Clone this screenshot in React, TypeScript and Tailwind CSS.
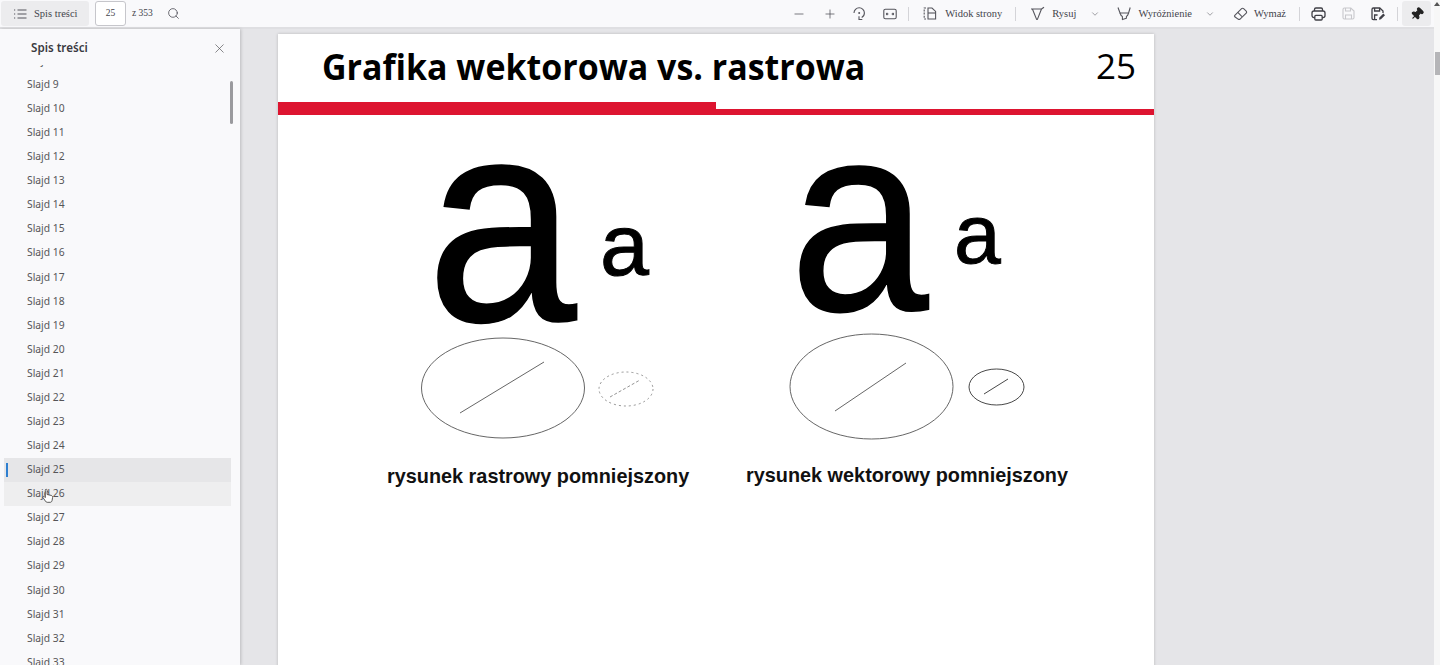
import React from 'react';
import { Search, Minus, Plus, X, ChevronDown, Pin } from 'lucide-react';

const slides = Array.from({ length: 26 }, (_, i) => i + 8);

function Sep() {
  return <div className="w-px h-[14px] bg-[#d4d4d8]" />;
}

function ListIcon() {
  return (
    <svg width="14" height="14" viewBox="0 0 14 14" fill="none" stroke="#55555c" strokeWidth="1.1">
      <path d="M4.5 3h9M4.5 7h9M4.5 11h9" />
      <path d="M1 3h1.2M1 7h1.2M1 11h1.2" />
    </svg>
  );
}

function RotateIcon() {
  return (
    <svg width="15" height="15" viewBox="0 0 15 15" fill="none" stroke="#55555c" strokeWidth="1.1">
      <path d="M2 7a5.2 5.2 0 0 1 10.4 0c0 2-1.1 3.6-2.7 4.5" />
      <path d="M7 10.2v3.3h3.3" />
      <circle cx="7.2" cy="7" r="1" fill="#55555c" stroke="none" />
    </svg>
  );
}

function FitIcon() {
  return (
    <svg width="14" height="12" viewBox="0 0 14 12" fill="none" stroke="#55555c" strokeWidth="1.1">
      <rect x="0.8" y="1.2" width="12.4" height="9.6" rx="1.6" />
      <path d="M3 6h2.4M3.2 6l1.2-1.1M3.2 6l1.2 1.1M11 6H8.6M10.8 6 9.6 4.9M10.8 6 9.6 7.1" />
    </svg>
  );
}

function PageViewIcon() {
  return (
    <svg width="14" height="13" viewBox="0 0 14 13" fill="none" stroke="#55555c" strokeWidth="1.1">
      <path d="M3 1H1.2v11H3" strokeDasharray="2 1.2" />
      <path d="M5 1h4l3.6 3.4V12H5z" />
      <path d="M5 6h7.6" />
    </svg>
  );
}

function DrawIcon() {
  return (
    <svg width="15" height="15" viewBox="0 0 15 15" fill="none" stroke="#55555c" strokeWidth="1.1">
      <path d="M1 3h10.5M2.4 3 6.6 13.4h.8L11.5 3 14 1.2" strokeLinejoin="round" />
    </svg>
  );
}

function HighlightIcon() {
  return (
    <svg width="15" height="15" viewBox="0 0 15 15" fill="none" stroke="#55555c" strokeWidth="1.1">
      <path d="M1 1.5 3 7h8.6l1.6-5.5" />
      <path d="M3 7c.6 2 1.4 3 2.4 3.4v3.2l4-1.4V10.4c1-.6 1.7-1.6 2.2-3.4" strokeLinejoin="round" />
    </svg>
  );
}

function EraserIcon() {
  return (
    <svg width="15" height="15" viewBox="0 0 15 15" fill="none" stroke="#55555c" strokeWidth="1.1">
      <path d="M1.8 9.4 8.6 2.6a1.4 1.4 0 0 1 2 0l2.6 2.6a1.4 1.4 0 0 1 0 2L6.8 13.4H5.4L1.8 10.8a1 1 0 0 1 0-1.4z" strokeLinejoin="round" />
      <path d="M4.8 6.4l4.2 4.2" />
    </svg>
  );
}

function PrintIcon() {
  return (
    <svg width="15" height="14" viewBox="0 0 15 14" fill="none" stroke="#3f3f46" strokeWidth="1.3">
      <path d="M3.5 4V2.4A1.4 1.4 0 0 1 4.9 1h5.2a1.4 1.4 0 0 1 1.4 1.4V4" />
      <rect x="1" y="4" width="13" height="6.6" rx="2" />
      <rect x="3.8" y="8.4" width="7.4" height="4.6" rx="1" fill="#f9f9fb" />
    </svg>
  );
}

function SaveIcon({ color }: { color: string }) {
  return (
    <svg width="13" height="13" viewBox="0 0 13 13" fill="none" stroke={color} strokeWidth="1.1">
      <path d="M2.4 1h6.4L12 4v6.6a1.4 1.4 0 0 1-1.4 1.4H2.4A1.4 1.4 0 0 1 1 10.6V2.4A1.4 1.4 0 0 1 2.4 1z" />
      <path d="M3.5 1v3h5V1M3.5 12V8h6v4" />
    </svg>
  );
}

function SaveEditIcon() {
  return (
    <svg width="15" height="14" viewBox="0 0 15 14" fill="none" stroke="#3f3f46" strokeWidth="1.3">
      <path d="M6 12.6H2.4A1.4 1.4 0 0 1 1 11.2V2.4A1.4 1.4 0 0 1 2.4 1h6.4L12 4v2" />
      <path d="M3.6 1v3h5V1M3.6 12V8h3" />
      <path d="M8 12.8 8.4 10.6 12.4 6.6 14 8.2 10 12.2z" fill="#3f3f46" stroke="none" />
    </svg>
  );
}

function Figure({ className, bigClass, smallClass, caption, captionClass, dashed, ring, line, miniRing, miniLine }: {
  className: string;
  bigClass: string;
  smallClass: string;
  caption: string;
  captionClass: string;
  dashed?: boolean;
  ring: number[];
  line: number[];
  miniRing: number[];
  miniLine: number[];
}) {
  const miniStroke = dashed ? '#888' : '#333';
  return (
    <div className={className}>
      <div className="relative h-[229px] font-['Liberation_Sans',sans-serif] text-black">
        <span className={bigClass}>a</span>
        <span className={smallClass}>a</span>
      </div>
      <svg width="340" height="112" viewBox="0 0 340 112" fill="none" stroke="#555" strokeWidth="0.9" className="block overflow-visible">
        <ellipse cx={ring[0]} cy={ring[1]} rx={ring[2]} ry={ring[3]} />
        <line x1={line[0]} y1={line[1]} x2={line[2]} y2={line[3]} />
        <ellipse cx={miniRing[0]} cy={miniRing[1]} rx={miniRing[2]} ry={miniRing[3]} strokeDasharray={dashed ? '2 3' : undefined} stroke={miniStroke} />
        <line x1={miniLine[0]} y1={miniLine[1]} x2={miniLine[2]} y2={miniLine[3]} strokeDasharray={dashed ? '3 2' : undefined} stroke={miniStroke} />
      </svg>
      <div className={captionClass}>{caption}</div>
    </div>
  );
}

export default function App() {
  return (
    <div className="h-[665px] w-[1440px] overflow-hidden flex bg-[#f7f7f7] font-['Noto_Sans',sans-serif]">
      <div className="w-[1434px] shrink-0 flex flex-col bg-[#e5e5e8]">
        <header className="h-[29px] shrink-0 bg-[#f9f9fb] border-b-2 border-[#dfdfe2] flex items-center pl-[1px] pr-[3px] text-[#44444c] font-['Liberation_Serif',serif] text-[10.5px]">
          <button className="h-[25px] w-[88px] rounded-[3px] bg-[#ececee] flex items-center pl-[12px] gap-[7px]">
            <ListIcon />
            <span>Spis treści</span>
          </button>
          <div className="ml-[6px] w-[31px] h-[25px] rounded-[3px] border border-[#c6c6cb] bg-white flex items-center justify-center text-[9.5px]">25</div>
          <span className="ml-[6px] text-[9.5px]">z 353</span>
          <Search size={13} strokeWidth={1.4} className="ml-[14px]" />

          <div className="ml-auto flex items-center">
            <Minus size={14} strokeWidth={1.2} />
            <Plus size={14} strokeWidth={1.2} className="ml-[17px]" />
            <div className="ml-[15px]"><RotateIcon /></div>
            <div className="ml-[16px]"><FitIcon /></div>
            <div className="ml-[11px]"><Sep /></div>
            <div className="ml-[14px]"><PageViewIcon /></div>
            <span className="ml-[8px]">Widok strony</span>
            <div className="ml-[13px]"><Sep /></div>
            <div className="ml-[14px]"><DrawIcon /></div>
            <span className="ml-[7px]">Rysuj</span>
            <ChevronDown size={10} strokeWidth={1.2} className="ml-[14px]" />
            <div className="ml-[17px]"><HighlightIcon /></div>
            <span className="ml-[6px]">Wyróżnienie</span>
            <ChevronDown size={10} strokeWidth={1.2} className="ml-[13px]" />
            <div className="ml-[18px]"><EraserIcon /></div>
            <span className="ml-[6px]">Wymaż</span>
            <div className="ml-[13px]"><Sep /></div>
            <div className="ml-[11px]"><PrintIcon /></div>
            <div className="ml-[16px]"><SaveIcon color="#c8c8cc" /></div>
            <div className="ml-[16px]"><SaveEditIcon /></div>
            <div className="ml-[11px]"><Sep /></div>
            <div className="ml-[4px] w-[29px] h-[25px] rounded-[3px] bg-[#ececee] flex items-center justify-center">
              <Pin size={14} fill="#222" stroke="#222" className="rotate-45" />
            </div>
          </div>
        </header>

        <div className="flex-1 flex min-h-0">
          <aside className="relative w-[240px] shrink-0 bg-[#f9f9fb] shadow-[1px_0_3px_rgba(0,0,0,0.18)] flex flex-col text-[#555558]">
            <div className="h-[36px] pt-[2px] shrink-0 flex items-center justify-between pl-[31px] pr-[13px]">
              <span className="text-[11.6px] font-semibold text-[#3a3a40]">Spis treści</span>
              <X size={15} strokeWidth={1.1} />
            </div>
            <div className="flex-1 overflow-hidden">
              <ul className="-mt-[16.5px] pl-[4px] pr-[9px]">
                {slides.map((n) => (
                  <li
                    key={n}
                    className={`relative h-[24.08px] flex items-center pl-[23px] text-[10.3px] ${n === 25 ? 'bg-[#e6e6e8]' : n === 26 ? 'bg-[#eeeeef]' : ''}`}
                  >
                    {n === 25 && <span className="absolute left-[2px] top-[5px] w-[2px] h-[14px] bg-[#2f7fd0]" />}
                    Slajd {n}
                  </li>
                ))}
              </ul>
            </div>
            <div className="absolute left-[230px] top-[52px] w-[3px] h-[43px] rounded-full bg-[#9a9a9e]" />
            <svg width="14" height="16" viewBox="0 0 14 16" className="absolute left-[41px] top-[459px]">
              <path d="M4.5 1.5c.8-.6 1.6 0 1.6.8v4.2l4 .9c1 .3 1.6 1 1.5 2l-.5 3c-.2 1-.8 1.9-1.8 1.9H6.2c-.8 0-1.3-.5-1.8-1.2L2 9.6c-.5-.9.5-1.7 1.3-1l1 1V2.3c0-.3 0-.6.2-.8z" fill="#fff" stroke="#333" strokeWidth="0.8" />
            </svg>
          </aside>

          <main className="flex-1 min-w-0 flex pl-[38px] pt-[5px]">
            <div className="w-[876px] h-[640px] shrink-0 bg-white shadow-[0_0_3px_rgba(0,0,0,0.2)] flex flex-col">
              <div className="h-[68px] pb-[3px] shrink-0 flex items-center justify-between pl-[44px] pr-[18px] font-['Open_Sans',sans-serif] text-black">
                <h1 className="text-[36.5px] font-bold leading-none origin-left scale-x-[0.93] whitespace-nowrap">Grafika wektorowa vs. rastrowa</h1>
                <span className="text-[35px] leading-none mb-[3px]">25</span>
              </div>
              <div className="flex items-end h-[13px] shrink-0">
                <div className="w-[438px] h-[13px] bg-[#dd1430]" />
                <div className="flex-1 h-[6.5px] bg-[#dd1430]" />
              </div>
              <div className="flex">
                <Figure
                  className="ml-[109px] w-[340px] pt-[2px]"
                  bigClass="absolute left-[39.5px] top-[-40px] text-[270px] leading-[1.15] origin-bottom scale-y-[1.07] [-webkit-text-stroke:1.5px_black]"
                  smallClass="absolute left-[213px] top-[77px] text-[88px] leading-[1.15] [-webkit-text-stroke:1px_black]"
                  caption="rysunek rastrowy pomniejszony"
                  captionClass="mt-[6px] font-['Liberation_Sans',sans-serif] font-bold text-[19.85px] leading-[24px] text-[#111] whitespace-nowrap"
                  dashed
                  ring={[116, 42, 81.5, 50]}
                  line={[73, 67, 157, 16]}
                  miniRing={[239, 43, 27, 17]}
                  miniLine={[223, 51, 253, 34]}
                />
                <Figure
                  className="ml-[20px] w-[340px] pt-[2px]"
                  bigClass="absolute left-[42.5px] top-[-33px] text-[250px] leading-[1.15] origin-bottom scale-y-[1.07] [-webkit-text-stroke:1.5px_black]"
                  smallClass="absolute left-[207px] top-[69px] text-[84px] leading-[1.15] [-webkit-text-stroke:1px_black]"
                  caption="rysunek wektorowy pomniejszony"
                  captionClass="mt-[5px] -ml-px font-['Liberation_Sans',sans-serif] font-bold text-[19.85px] leading-[24px] text-[#111] whitespace-nowrap"
                  ring={[124.5, 40.5, 81.5, 52.5]}
                  line={[88, 65, 159, 17]}
                  miniRing={[249.5, 41, 27.5, 18]}
                  miniLine={[237, 48, 261, 33]}
                />
              </div>
            </div>
          </main>
        </div>
      </div>
      <div className="flex-1 relative">
        <div className="absolute left-[1px] top-[52px] w-[5px] h-[23px] bg-[#b5b5b8]" />
        <svg width="6" height="4" viewBox="0 0 6 4" className="absolute left-[0px] top-[2px]">
          <path d="M3 0 6 4H0z" fill="#555" />
        </svg>
      </div>
    </div>
  );
}
